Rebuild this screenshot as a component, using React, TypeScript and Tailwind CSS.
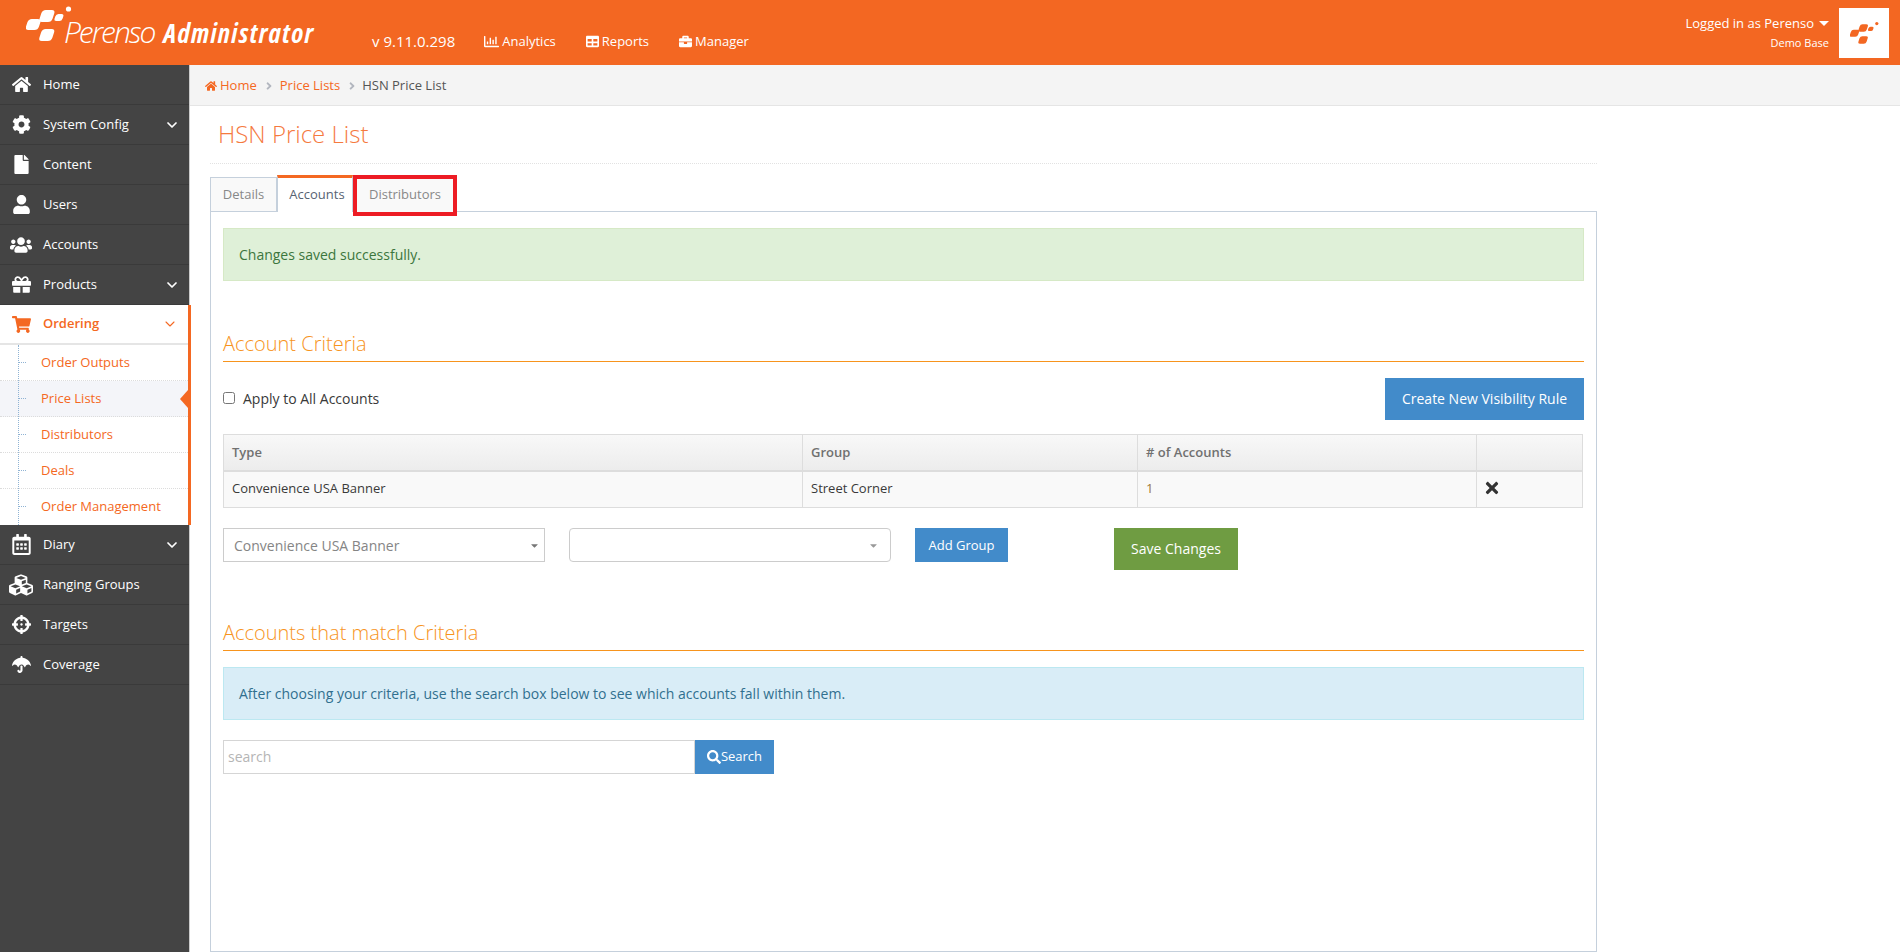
import React from "react";
import {
  FaHome, FaCog, FaFile, FaUser, FaUsers, FaGift, FaShoppingCart, FaRegCalendarAlt, FaCubes, FaCrosshairs, FaUmbrella,
  FaRegChartBar, FaTable, FaBriefcase, FaTimes, FaSearch, FaCaretDown, FaAngleRight,
} from "react-icons/fa";
import { ChevronDown } from "lucide-react";

function Logo({ className, color }: { className: string; color: string }) {
  return (
    <svg viewBox="0 0 46 38" className={className} fill={color}>
      <rect x="2" y="14" width="13" height="11" rx="3.5" transform="skewX(-18) translate(5 0)" />
      <rect x="12" y="5" width="13" height="12" rx="3.5" transform="skewX(-18) translate(6 0)" />
      <rect x="15" y="24" width="13" height="12" rx="3.5" transform="skewX(-18) translate(9 0)" />
      <rect x="28" y="9" width="8" height="7" rx="2.5" transform="skewX(-18) translate(5 0)" />
      <circle cx="42.5" cy="4" r="2.6" />
    </svg>
  );
}

function NavRow({ icon, label, chevron }: { icon: React.ReactNode; label: string; chevron?: boolean }) {
  return (
    <div className="flex h-[40px] items-center border-b border-[#3a3a3a] text-[13px] text-white">
      <span className="flex w-[43px] shrink-0 justify-center pr-[1px] text-[19px]">{icon}</span>
      <span className="flex-1">{label}</span>
      {chevron && <ChevronDown size={16} strokeWidth={2.6} className="mr-[9px]" />}
    </div>
  );
}

function SubRow({ label, active }: { label: string; active?: boolean }) {
  return (
    <div className={`relative flex h-[36px] items-center border-b border-dotted border-[#dcdcdc] pl-[41px] text-[13px] text-[#f46822] last:border-b-0 ${active ? "bg-[#f4f5f9]" : "bg-white"}`}>
      <span className="absolute left-[19px] top-[17px] w-[7px] border-t border-dotted border-[#8fb3d4]" />
      {label}
      {active && <span className="absolute right-0 top-[9px] h-0 w-0 border-y-[9px] border-r-[8px] border-y-transparent border-r-[#f46822]" />}
    </div>
  );
}

function Heading({ children, className }: { children: React.ReactNode; className: string }) {
  return (
    <div className={`flex h-[35px] items-center border-b border-[#f7941d] pb-[1px] text-[20px] font-light text-[#f7941d] ${className}`}>
      {children}
    </div>
  );
}

export default function App() {
  return (
    <div className="flex h-[952px] w-[1900px] flex-col overflow-hidden bg-white font-['Open_Sans',sans-serif] text-[13px]">
      <header className="flex h-[65px] shrink-0 items-center bg-[#f36722] text-white">
        <Logo className="ml-[26px] mb-[26px] mt-[8px] h-[38px] w-[46px]" color="#ffffff" />
        <div className="mb-[3px] ml-[-8px] flex w-[310px] shrink-0 items-baseline italic">
          <span className="text-[30px] font-light tracking-[-2px]">Perenso</span>
          <span className="ml-[9px] text-[27px] font-bold tracking-[1.3px] [font-stretch:condensed]">Administrator</span>
        </div>
        <div className="mt-[18px] flex items-center">
          <span className="ml-[-2px] text-[15px]">v 9.11.0.298</span>
          <span className="ml-[29px] flex items-center gap-[3px]"><FaRegChartBar className="text-[15px]" />Analytics</span>
          <span className="ml-[30px] flex items-center gap-[3px]"><FaTable className="text-[13px]" />Reports</span>
          <span className="ml-[30px] flex items-center gap-[3px]"><FaBriefcase className="text-[13px]" />Manager</span>
        </div>
        <div className="ml-auto mr-[10px] flex flex-col items-end">
          <span className="flex items-center text-[13px] leading-[18px]">
            Logged in as Perenso
            <span className="ml-[5px] h-0 w-0 border-x-[5px] border-t-[5px] border-x-transparent border-t-white" />
          </span>
          <span className="mt-[3px] text-[11px] leading-[16px]">Demo Base</span>
        </div>
        <div className="mr-[11px] flex h-[50px] w-[50px] items-center justify-center bg-white">
          <Logo className="h-[24px] w-[29px]" color="#f36722" />
        </div>
      </header>

      <div className="flex min-h-0 flex-1">
        <aside className="w-[190px] shrink-0 border-r border-[#cccccc] bg-[#444444]">
          <NavRow icon={<FaHome />} label="Home" />
          <NavRow icon={<FaCog />} label="System Config" chevron />
          <NavRow icon={<FaFile />} label="Content" />
          <NavRow icon={<FaUser />} label="Users" />
          <NavRow icon={<FaUsers className="text-[22px]" />} label="Accounts" />
          <NavRow icon={<FaGift />} label="Products" chevron />
          <div className="relative z-10 mr-[-2px] border-r-[3px] border-[#f46822] bg-white">
            <div className="flex h-[40px] items-center border-b-2 border-[#e5e5e5] text-[13px] font-semibold text-[#f46822]">
              <span className="flex w-[43px] shrink-0 justify-center pr-[1px] text-[19px]"><FaShoppingCart /></span>
              <span className="flex-1">Ordering</span>
              <ChevronDown size={16} strokeWidth={1.6} className="mr-[10px]" />
            </div>
            <div className="relative">
              <span className="absolute bottom-0 left-[18px] top-0 z-10 border-l border-dotted border-[#8fb3d4]" />
              <SubRow label="Order Outputs" />
              <SubRow label="Price Lists" active />
              <SubRow label="Distributors" />
              <SubRow label="Deals" />
              <SubRow label="Order Management" />
            </div>
          </div>
          <NavRow icon={<FaRegCalendarAlt className="text-[21px]" />} label="Diary" chevron />
          <NavRow icon={<FaCubes className="text-[24px]" />} label="Ranging Groups" />
          <NavRow icon={<FaCrosshairs />} label="Targets" />
          <NavRow icon={<FaUmbrella />} label="Coverage" />
        </aside>

        <main className="flex min-w-0 flex-1 flex-col">
          <nav className="flex h-[41px] shrink-0 items-center border-b border-[#e5e5e5] bg-[#f4f4f4] pl-[15px] pt-[1px] text-[13px] text-[#f46822]">
            <FaHome className="mr-[3px] text-[12px]" />
            <span>Home</span>
            <FaAngleRight className="ml-[6px] mr-[5px] text-[12px] text-[#b2b6bf]" />
            <span>Price Lists</span>
            <FaAngleRight className="ml-[6px] mr-[4px] text-[12px] text-[#b2b6bf]" />
            <span className="text-[#555555]">HSN Price List</span>
          </nav>

          <div className="ml-[20px] flex min-h-0 w-[1387px] flex-1 flex-col">
            <div className="flex h-[58px] shrink-0 items-center border-b border-dotted border-[#e2e2e2] pb-[2px] pl-[8px] text-[24px] font-light text-[#f57a3f]">
              HSN Price List
            </div>

            <div className="relative z-10 mt-[11px] flex h-[37px] shrink-0 items-end text-[13px]">
              <div className="flex h-[35px] w-[67px] items-center justify-center border border-[#c5d0dc] bg-[#f9f9f9] text-[#888888]">Details</div>
              <div className="flex h-[37px] w-[76px] items-center justify-center border-x border-t-[3px] border-x-[#c5d0dc] border-t-[#f46822] bg-white pb-[1px] pl-[4px] text-[#576373]">Accounts</div>
              <div className="relative flex h-[35px] w-[104px] items-center justify-center bg-[#f9f9f9] text-[#888888]">
                Distributors
                <span className="absolute -top-[2px] bottom-[-4px] left-0 right-0 border-4 border-[#ed1c24]" />
              </div>
            </div>

            <section className="mt-[-1px] min-h-0 flex-1 border border-[#c5d0dc] px-[12px] pt-[16px]">
              <div className="flex h-[53px] items-center border border-[#d6e9c6] bg-[#dff0d8] pl-[15px] text-[14px] text-[#3c763d]">
                Changes saved successfully.
              </div>

              <Heading className="mt-[46px]">Account Criteria</Heading>

              <div className="mt-[16px] flex h-[42px] items-center justify-between">
                <label className="flex items-center pb-[2px] text-[14px] text-[#393939]">
                  <input type="checkbox" className="mr-[8px] h-[12px] w-[12px]" />
                  Apply to All Accounts
                </label>
                <button className="h-[42px] w-[199px] bg-[#428bca] pb-[2px] text-[14px] text-white">Create New Visibility Rule</button>
              </div>

              <table className="mt-[14px] w-[1360px] table-fixed border-collapse text-[13px]">
                <thead>
                  <tr className="h-[36px] bg-gradient-to-b from-[#f8f8f8] to-[#ececec] text-left text-[#707070]">
                    <th className="w-[579px] border border-b-2 border-[#dddddd] pl-[8px] font-semibold">Type</th>
                    <th className="w-[335px] border border-b-2 border-[#dddddd] pl-[8px] font-semibold">Group</th>
                    <th className="w-[339px] border border-b-2 border-[#dddddd] pl-[8px] font-semibold"># of Accounts</th>
                    <th className="border border-b-2 border-[#dddddd]"></th>
                  </tr>
                </thead>
                <tbody>
                  <tr className="h-[37px] bg-[#f9f9f9] text-[#393939]">
                    <td className="border border-[#dddddd] pb-[2px] pl-[8px]">Convenience USA Banner</td>
                    <td className="border border-[#dddddd] pb-[2px] pl-[8px]">Street Corner</td>
                    <td className="border border-[#dddddd] pb-[2px] pl-[8px] text-[#9c7a3c]">1</td>
                    <td className="border border-[#dddddd] pb-[2px] pl-[6px] text-[18px] text-[#333333]"><FaTimes /></td>
                  </tr>
                </tbody>
              </table>

              <div className="mt-[20px] flex items-start">
                <div className="flex h-[34px] w-[322px] items-center justify-between border border-[#cccccc] pl-[10px] pr-[4px] text-[14px] text-[#858585]">
                  Convenience USA Banner
                  <FaCaretDown className="text-[11px] text-[#777777]" />
                </div>
                <div className="ml-[24px] flex h-[34px] w-[322px] items-center justify-end rounded-[4px] border border-[#cccccc] pr-[11px]">
                  <FaCaretDown className="text-[11px] text-[#999999]" />
                </div>
                <button className="ml-[24px] h-[34px] w-[93px] bg-[#428bca] pt-[1px] text-[13px] text-white">Add Group</button>
                <button className="ml-[106px] h-[42px] w-[124px] bg-[#6f9c42] pb-[2px] text-[14px] text-white">Save Changes</button>
              </div>

              <Heading className="mt-[46px]">Accounts that match Criteria</Heading>

              <div className="mt-[16px] flex h-[53px] items-center border border-[#bce8f1] bg-[#d9edf7] pl-[15px] text-[14px] text-[#31708f]">
                After choosing your criteria, use the search box below to see which accounts fall within them.
              </div>

              <div className="mt-[20px] flex h-[34px]">
                <div className="flex w-[472px] items-center border border-[#d5d5d5] pb-[2px] pl-[4px] text-[14px] text-[#b5b5b5]">search</div>
                <button className="flex w-[79px] items-center justify-center bg-[#428bca] text-[13px] text-white">
                  <FaSearch className="text-[14px]" />Search
                </button>
              </div>
            </section>
          </div>
        </main>
      </div>
    </div>
  );
}
